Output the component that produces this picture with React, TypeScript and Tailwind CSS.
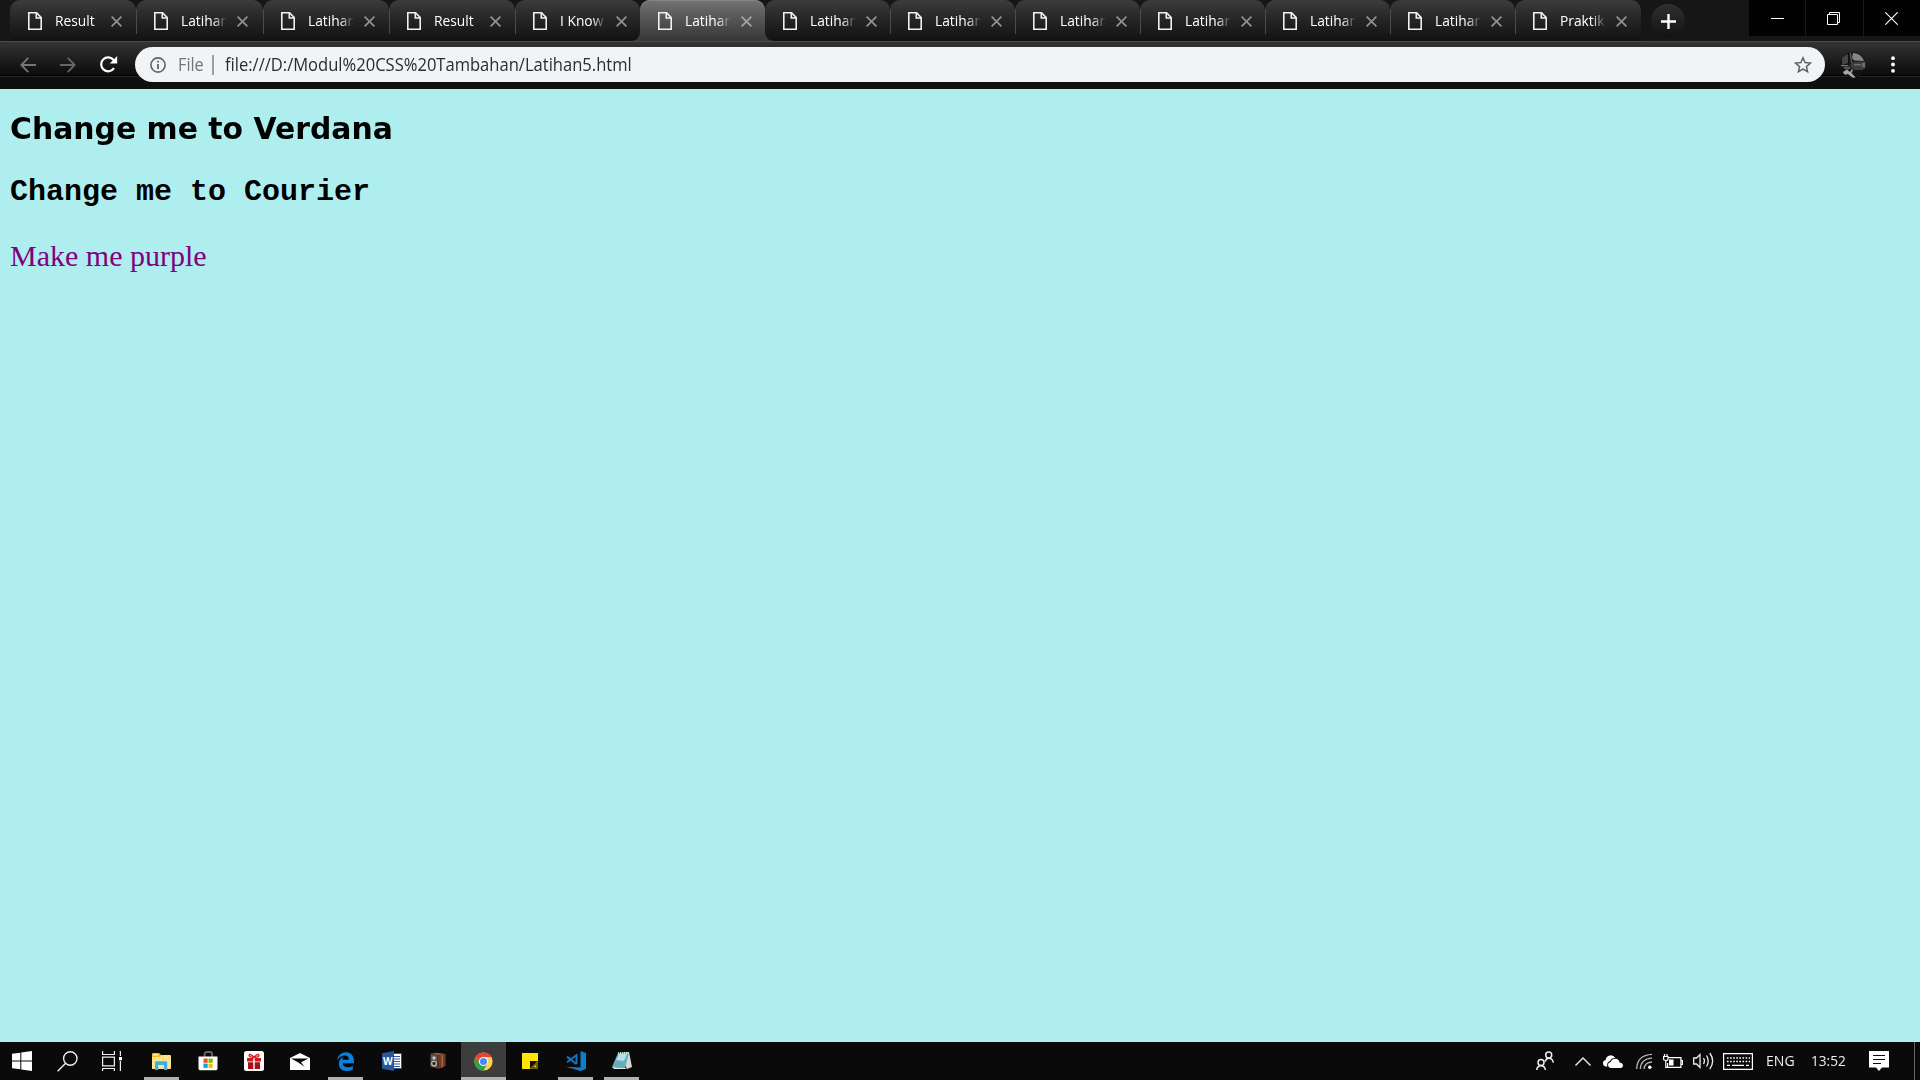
import React from 'react';

const tabs = [
  { t: 'Result', w: 126 },
  { t: 'Latihan', w: 127 },
  { t: 'Latihan', w: 126 },
  { t: 'Result', w: 126 },
  { t: 'I Know', w: 125 },
  { t: 'Latihan', w: 125, active: true },
  { t: 'Latihan', w: 125 },
  { t: 'Latihan', w: 125 },
  { t: 'Latihan', w: 125 },
  { t: 'Latihan', w: 125 },
  { t: 'Latihan', w: 125 },
  { t: 'Latihan', w: 125 },
  { t: 'Praktik', w: 126 },
];

function FileIcon() {
  return (
    <svg width="14" height="18" viewBox="0 0 14 18" className="shrink-0" fill="none" stroke="#f1f1f1" strokeWidth="1.6">
      <path d="M.8 .8H8.6L13.2 5.6V17.2H.8Z" />
      <path d="M8.3 1V6H13" />
    </svg>
  );
}

function Tab({ t, w, active, last, beforeActive }: { t: string; w: number; active?: boolean; last?: boolean; beforeActive?: boolean }) {
  return (
    <div
      className={
        'relative flex h-full shrink-0 items-center rounded-t-[10px] pl-[18px] ' +
        (active
          ? 'z-10 h-[42px] bg-linear-to-b from-[#737373] to-[#363636] shadow-[inset_0_1px_0_#858585]'
          : 'bg-linear-to-b from-[#3c3c3c] via-[#242424] to-[#121212]')
      }
      style={{ width: w }}
    >
      <div className="flex h-[42px] items-center self-start">
        <FileIcon />
        <div className={'-mt-[2px] ml-[13px] w-[46px] whitespace-nowrap text-[15px] leading-[20px] text-white ' + (t === 'Result' ? '' : 'mask-r-from-70% mask-r-to-100%')}>
          <span className="inline-block origin-left scale-x-[.92]">{t}</span>
        </div>
        <svg width="11" height="11" viewBox="0 0 11 11" className="ml-[10px] shrink-0" stroke={active ? '#a5a5a5' : '#929292'} strokeWidth="1.7">
          <path d="M.6 .6L10.4 10.4M10.4 .6L.6 10.4" />
        </svg>
      </div>
      {!active && !last && !beforeActive && <div className="absolute -right-px top-[9px] z-10 h-[25px] w-px bg-[#4c4c4c]" />}
      {active && (
        <>
          <svg className="absolute bottom-0 -left-[10px]" width="10" height="10" viewBox="0 0 10 10"><path d="M10 0V10H0Q10 10 10 0" fill="#3c3c3c" /></svg>
          <svg className="absolute bottom-0 -right-[10px]" width="10" height="10" viewBox="0 0 10 10"><path d="M0 0V10H10Q0 10 0 0" fill="#3c3c3c" /></svg>
        </>
      )}
    </div>
  );
}

function WindowButtons() {
  return (
    <div className="ml-auto flex h-[36px] shrink-0 gap-px bg-[#191919]">
      <div className="flex w-[56px] items-center justify-center bg-[#020202]">
        <svg width="13" height="13" viewBox="0 0 13 13"><path d="M0 6.5H13" stroke="#fff" /></svg>
      </div>
      <div className="flex w-[57px] items-center justify-center bg-[#020202] pr-[2px]">
        <svg width="13" height="13" viewBox="0 0 13 13" fill="none" stroke="#fff"><path d="M.5 2.5H10.5V12.5H.5ZM2.5 2.5V.5H12.5V10.5H10.5" /></svg>
      </div>
      <div className="flex w-[56px] items-center justify-center bg-[#020202] pr-[2px]">
        <svg width="13" height="13" viewBox="0 0 13 13" stroke="#fff" strokeWidth="1.1"><path d="M.3 .3L12.7 12.7M12.7 .3L.3 12.7" /></svg>
      </div>
    </div>
  );
}

function Toolbar() {
  return (
    <div className="h-[48px] shrink-0 bg-[#0f0f0f]">
      <div className="h-[35px] border-t border-[#4a4a4a] bg-linear-to-b from-[#343434] to-[#0b0b0b] shadow-[0_1px_0_#252525,inset_0_-1px_0_#000]">
        <div className="flex h-[45px] items-center">
          <svg width="16" height="16" viewBox="0 0 16 16" className="ml-[20px] shrink-0" fill="none" stroke="#777" strokeWidth="1.8"><path d="M16 8H1.5M8.3 .8L1.3 8L8.3 15.2" /></svg>
          <svg width="16" height="16" viewBox="0 0 16 16" className="ml-[24px] shrink-0" fill="none" stroke="#666" strokeWidth="1.8"><path d="M0 8H14.5M7.7 .8L14.7 8L7.7 15.2" /></svg>
          <svg width="18" height="17" viewBox="0 0 18 17" className="ml-[24px] shrink-0"><path d="M14 12.2A7 7 0 1 1 13.7 4" fill="none" stroke="#fff" strokeWidth="2.2" /><path d="M17.2 0V7.4H9.8Z" fill="#fff" /></svg>
          <div className="ml-[17px] flex h-[35px] w-[1690px] shrink-0 items-center rounded-full bg-[#f1f3f4] text-[17.5px]">
            <svg width="16" height="16" viewBox="0 0 16 16" className="ml-[15px] shrink-0"><circle cx="8" cy="8" r="7.1" fill="none" stroke="#5f6368" strokeWidth="1.6" /><path d="M7.1 3.8h1.8v1.8H7.1zM7.1 7h1.8v5H7.1z" fill="#5f6368" /></svg>
            <span className="ml-[12px] w-[26px] whitespace-nowrap text-[#70757a]"><span className="inline-block origin-left scale-x-[.93]">File</span></span>
            <div className="ml-[8px] h-[20px] w-[2px] bg-[#9a9ea2]" />
            <span className="ml-[11px] w-[440px] whitespace-nowrap text-[#2b2c2f]"><span className="inline-block origin-left scale-x-[.946]">file:///D:/Modul%20CSS%20Tambahan/Latihan5.html</span></span>
            <svg width="18" height="18" viewBox="0 0 18 18" className="ml-auto mr-[13px] shrink-0" fill="none" stroke="#5f6368" strokeWidth="1.5"><path d="M9 1.8L11.1 6.6L16.4 7.1L12.4 10.6L13.6 15.8L9 13L4.4 15.8L5.6 10.6L1.6 7.1L6.9 6.6Z" /></svg>
          </div>
          <svg width="26" height="26" viewBox="0 0 26 26" className="ml-[15px] shrink-0">
            <defs><clipPath id="avatar"><circle cx="13" cy="13" r="12.7" /></clipPath></defs>
            <g clipPath="url(#avatar)">
              <path d="M0 0H26V26H0Z" fill="#131313" />
              <path d="M2 5L8 2L8 11L2 13Z" fill="#454545" />
              <path d="M13 1Q21 1 24 9L14 8.500L12 6Z" fill="#858585" />
              <path d="M10.500 1L11.500 11" stroke="#777" strokeWidth="1" />
              <path d="M11 10L26 9V16L22 18H14L10 14Z" fill="#3d3d3d" />
              <path d="M14 12H21V13.500H14ZM22 11H25V15H22Z" fill="#6d6d6d" />
              <path d="M0 13H9L12 17L6 18Z" fill="#303030" />
              <path d="M3 20L7 17.500L10 20L12 17L13 18L11.500 21L16 26L13 26L8 22L4 23Z" fill="#a8a8a8" />
              <path d="M1 13.500L8 13.500M4 16L10 16" stroke="#777" />
            </g>
          </svg>
          <svg width="4" height="17" viewBox="0 0 4 17" className="ml-[25px] shrink-0" fill="#fff"><circle cx="2" cy="2.2" r="1.9" /><circle cx="2" cy="8.5" r="1.9" /><circle cx="2" cy="14.8" r="1.9" /></svg>
        </div>
      </div>
    </div>
  );
}

const appIcons: { w: number; running?: boolean; active?: boolean; icon: React.ReactNode }[] = [
  {
    w: 44,
    icon: <svg width="20" height="20" viewBox="0 0 20 20" fill="#fff"><path d="M0 2.8L8.3 1.7V9.5H0ZM9.3 1.5L20 0V9.5H9.3ZM0 10.5H8.3V18.3L0 17.2ZM9.3 10.5H20V20L9.3 18.5Z" /></svg>,
  },
  {
    w: 46,
    icon: <svg width="21" height="21" viewBox="0 0 21 21" fill="none" stroke="#eee" strokeWidth="1.4"><circle cx="13.3" cy="7.5" r="6.7" /><path d="M8.6 12.3L.6 20.3" /></svg>,
  },
  {
    w: 44,
    icon: (
      <svg width="20" height="20" viewBox="0 0 20 20" fill="none" stroke="#eee" strokeWidth="1.2">
        <path d="M.6 0V3.5H12.4V0M.6 6.2H12.4V14.8H.6ZM.6 20V17.5H12.4V20M18.4 0V5M18.4 10V20" />
        <path d="M17 6H20V9.3H17Z" fill="#fff" stroke="none" />
      </svg>
    ),
  },
  {
    w: 45, running: true,
    icon: (
      <svg width="19" height="17" viewBox="0 0 19 17">
        <path d="M0 1Q0 0 1 0H7L9 2H17V5H0Z" fill="#f5b921" /><path d="M1 1.5H6V2.5H1Z" fill="#fff" />
        <path d="M0 4H8L10 2H18Q19 2 19 3V15Q19 16 18 16H0Z" fill="#ffe391" />
        <path d="M3 17V9.5Q3 8.3 4.2 8.3H14Q15.2 8.3 15.2 9.5V17H12V12H6.2V17Z" fill="#38b1e8" />
      </svg>
    ),
  },
  {
    w: 45,
    icon: (
      <svg width="20" height="20" viewBox="0 0 20 20">
        <path d="M6.5 6V3.5Q6.5 1 9 1H12Q14.2 1 14.2 3.5V6" fill="none" stroke="#666" strokeWidth="1.8" />
        <path d="M.5 5.5H19.5V17.5Q19.5 19.3 18 19.3H2Q.5 19.3 .5 17.5Z" fill="#fff" />
        <path d="M5.5 7.5H9.7V11.8H5.5Z" fill="#f25022" /><path d="M10.5 7.5H14.7V11.8H10.5Z" fill="#7fba00" />
        <path d="M5.5 12.6H9.7V16.9H5.5Z" fill="#00a4ef" /><path d="M10.5 12.6H14.7V16.9H10.5Z" fill="#ffb900" />
      </svg>
    ),
  },
  {
    w: 45,
    icon: (
      <svg width="20" height="20" viewBox="0 0 20 20">
        <rect width="20" height="20" rx="2.5" fill="#fff" />
        <path d="M3 7H9.300V10.500H3ZM10.700 7H17V10.500H10.700Z" fill="#c81d25" /><path d="M4 11.200H9.300V18H4ZM10.700 11.200H16V18H10.700Z" fill="#a90f17" />
        <path d="M10 6.300Q5 6.500 5.200 4.300Q6 2 10 6.300Q14 2 14.800 4.300Q15 6.500 10 6.300" fill="none" stroke="#d5222a" strokeWidth="1.500" />
      </svg>
    ),
  },
  {
    w: 45,
    icon: <svg width="20" height="17" viewBox="0 0 20 17"><path d="M0 5L10 0L20 5V17H0Z" fill="#fff" /><path d="M1 5.5H18.5L11 9.2L14.5 13.8L7.5 9Z" fill="#090909" /></svg>,
  },
  {
    w: 45, running: true,
    icon: (
      <svg width="17" height="19" viewBox="0 0 17 19">
        <path d="M.2 8.4C1 3 4.5 .2 9 .2C14 .2 17 4 17 9V11.2H5.6C5.8 14 8 15.3 10.5 15.3C12.7 15.3 14.4 14.6 15.8 13.7V17.4C14 18.5 12 19 9.6 19C5 19 1.9 16.2 1.9 12C1.9 9 3.4 6.5 6.3 5.1C5.8 6 5.6 7 5.5 7.8H11.8C11.8 5 10.5 3.6 7.9 3.6C4.8 3.6 2 5.4 .2 8.4Z" fill="#0a7fdc" />
      </svg>
    ),
  },
  {
    w: 45,
    icon: (
      <svg width="20" height="20" viewBox="0 0 20 20">
        <path d="M11 2.5H19.5V17.5H11Z" fill="#fff" stroke="#2b579a" /><path d="M12 5.5H18M12 8H18M12 10.5H18M12 13H18M12 15.5H18" stroke="#2b579a" />
        <path d="M0 2.3L12 0V20L0 17.7Z" fill="#2b579a" />
        <text x="5.9" y="13.8" textAnchor="middle" fontSize="10" fontWeight="bold" fill="#fff">W</text>
      </svg>
    ),
  },
  {
    w: 45,
    icon: (
      <svg width="18" height="18" viewBox="0 0 18 18">
        <path d="M1.500 1.500L8 .8L16.500 2V14L9.500 17L1.500 15Z" fill="#3b1d11" />
        <path d="M9 3.200L16.500 2V14L9.500 17Z" fill="#6f3a22" /><path d="M12.500 3L14 2.600V15L12.500 15.700Z" fill="#a5694a" />
        <path d="M1.500 1.500L8 .8L16.500 2L9 3.300Z" fill="#8d573c" />
        <path d="M1.500 2.300L8.500 3.500V16.300L1.500 14.500Z" fill="#5c534d" />
        <circle cx="5" cy="6" r="1.700" fill="#c9c4bf" /><circle cx="5" cy="11.600" r="2.300" fill="#2a2522" stroke="#cbc5bf" strokeWidth="1.100" />
      </svg>
    ),
  },
  {
    w: 45, running: true, active: true,
    icon: (
      <svg width="19" height="19" viewBox="0 0 48 48">
        <circle cx="24" cy="24" r="23" fill="#ffd24a" />
        <path d="M4.1 12.5A23 23 0 0 0 24 47L34 29.7L24 24L14 29.7Z" fill="#2ba24c" />
        <path d="M24 24V12.5H43.9A23 23 0 0 0 4.1 12.5L14 29.8Z" fill="#e54335" />
        <circle cx="24" cy="24" r="11.5" fill="#fff" /><circle cx="24" cy="24" r="9" fill="#4688f4" />
      </svg>
    ),
  },
  {
    w: 45,
    icon: <svg width="16" height="16" viewBox="0 0 16 16"><path d="M0 0H16V16H0Z" fill="#ffe500" /><path d="M8 8H16L8 16Z" fill="#12120a" /><path d="M16 8V16H8Z" fill="#6b6000" /><path d="M14 12V14H12Z" fill="#ffe500" /></svg>,
  },
  {
    w: 45, running: true,
    icon: (
      <svg width="20" height="20" viewBox="0 0 20 20">
        <path d="M14.5 0L20 2V18L14.5 20L0 15.8L14.5 16.5Z" fill="#0b7fcc" />
        <path d="M1 5.6L10.2 13M1 11.2L10.5 4.3V13.3" fill="none" stroke="#1673ba" strokeWidth="2" />
      </svg>
    ),
  },
  {
    w: 45, running: true,
    icon: (
      <svg width="20" height="18" viewBox="0 0 20 18">
        <path d="M6 1L17 0L20 15L15 17Z" fill="#d5dad9" /><path d="M6 1L17 1L13 16L0 15Z" fill="#67aebb" /><path d="M7 2L15 2L12 9L4 8Z" fill="#b4e0e7" />
        <path d="M0 15L13 16L15 17L2 17Z" fill="#e4eff0" /><path d="M6 1H17" stroke="#eee" strokeDasharray="1 1" strokeWidth="1.5" />
      </svg>
    ),
  },
];

function Taskbar() {
  return (
    <div className="flex h-[38px] w-full shrink-0 bg-[#0a0a0a] text-white">
      {appIcons.map((a, i) => (
        <div
          key={i}
          className={'relative flex shrink-0 items-center justify-center ' + (a.active ? 'bg-[#3d3d3d] ' : '') + (i > 3 ? 'ml-px ' : i === 3 ? 'ml-[5px] ' : '')}
          style={{ width: a.w }}
        >
          {a.icon}
          {a.running && <div className={'absolute bottom-0 h-[3px] bg-[#b0b0ac] ' + (a.active ? 'inset-x-0' : 'inset-x-[5px]')} />}
        </div>
      ))}
      <div className="ml-auto flex items-center">
        <svg width="18" height="20" viewBox="0 0 18 20" fill="none" stroke="#eee" strokeWidth="1.5">
          <circle cx="12.7" cy="3.9" r="3" /><path d="M9.2 10.6Q9.8 7.2 12.8 7.2Q16.6 7.2 17.3 11.6" /><circle cx="5" cy="11.4" r="3" /><path d="M.7 19Q1.2 14.7 5 14.7Q8.8 14.7 9.4 19" />
        </svg>
        <svg width="16" height="9" viewBox="0 0 16 9" className="ml-[21px]" fill="none" stroke="#eee" strokeWidth="1.4"><path d="M.5 8.5L8 1L15.5 8.5" /></svg>
        <svg width="20" height="13" viewBox="0 0 20 13" className="ml-[12px]">
          <path d="M3 11.5Q0 11 0 8.2Q0 5.5 2.7 5Q3 1 7 .4Q10.500 0 12.300 3Q8.500 2.500 7 6Q3.500 7 4.300 11.500Z" fill="#fff" />
          <path d="M7.500 13Q5 12.500 5 10Q5 7.500 7.800 7Q9 3.500 12.500 3.700Q15.800 4 16.600 7.500Q20 8 20 10.500Q19.800 13 17.500 13Z" fill="#fff" />
        </svg>
        <svg width="16" height="17" viewBox="0 0 16 17" className="ml-[13px]" fill="none" stroke="#b5b5b5" strokeWidth="1.3">
          <path d="M.7 16Q1 2 16 1.300M4.300 16Q4.800 5.800 16 5.200M8 16Q8.500 9.500 16 9" /><circle cx="13.800" cy="14.300" r="1.800" fill="#fff" stroke="none" />
        </svg>
        <svg width="20" height="15" viewBox="0 0 20 15" className="ml-[11px]" fill="none" stroke="#fff" strokeWidth="1.200">
          <path d="M5 3.600H17.900V13.400H4.600V9M18 6.500H19.400V10.500H18M1.500 0V2.500M4 0V2.500M.6 2.500H5V5Q5 6.500 2.800 6.500Q.6 6.500 .6 5ZM2.800 6.500V13.400H5" /><path d="M6 5.500H10.500V11.500H6Z" fill="#fff" stroke="none" />
        </svg>
        <svg width="21" height="18" viewBox="0 0 21 18" className="ml-[10px]" fill="none" stroke="#eee" strokeWidth="1.300">
          <path d="M.7 6H3.500L7 2.500V15.500L3.500 12H.7Z" /><path d="M10.500 6Q12.300 9 10.500 12M13.500 3.500Q17 9 13.500 14.500M16.800 1Q22.500 9 16.800 17" />
        </svg>
        <svg width="30" height="17" viewBox="0 0 30 17" className="ml-[9px]" fill="none" stroke="#fff" strokeWidth="1.200">
          <path d="M.6 .6H29.400V16.400H.6Z" /><path d="M4 5H27M4 8.500H27" strokeWidth="1.400" strokeDasharray="1.600 1.500" /><path d="M4 12.300H7M9 12.300H21M23 12.300H26" />
        </svg>
        <span className="-mt-px ml-[13px] w-[29px] whitespace-nowrap text-[15px] text-[#eee]"><span className="inline-block origin-left scale-x-[.94]">ENG</span></span>
        <span className="-mt-px ml-[16px] w-[35px] whitespace-nowrap text-[15px] text-[#eee]"><span className="inline-block origin-left scale-x-[.91]">13:52</span></span>
        <svg width="20" height="20" viewBox="0 0 20 20" className="ml-[23px]"><path d="M0 0H20V16.500H13L10 20L7 16.500H0Z" fill="#fff" /><path d="M4 4.500H16M4 8.500H16M4 12.500H12" stroke="#090b0a" strokeWidth="1.200" /></svg>
        <div className="ml-[25px] h-[38px] w-px bg-[#666]" />
        <div className="w-[5px]" />
      </div>
    </div>
  );
}

export default function App() {
  return (
    <div className="flex h-[1080px] w-[1920px] flex-col overflow-hidden bg-[#afeeee] font-['Open_Sans',sans-serif]">
      <div className="flex h-[41px] shrink-0 bg-[#161616] pl-[10px]">
        {tabs.map((tab, i) => (
          <Tab key={i} {...tab} last={i === tabs.length - 1} beforeActive={!!tabs[i + 1]?.active} />
        ))}
        <div className="mt-[4px] ml-[10px] flex size-[34px] items-center justify-center rounded-full bg-linear-to-b from-[#303030] to-[#121212]">
          <svg width="15" height="15" viewBox="0 0 15 15" stroke="#fff" strokeWidth="2.400"><path d="M7.500 0V15M0 7.500H15" /></svg>
        </div>
        <WindowButtons />
      </div>
      <Toolbar />
      <main className="flex-1 px-[10px] text-black">
        <h2 className="mt-[22px] whitespace-nowrap font-['DejaVu_Sans',sans-serif] text-[30px] leading-[36px] font-bold"><span className="inline-block origin-left scale-x-[.995]">Change me to Verdana</span></h2>
        <h2 className="mt-[28px] whitespace-nowrap font-['Liberation_Mono',monospace] text-[30px] leading-[34px] font-bold">Change me to Courier</h2>
        <p className="mt-[30px] whitespace-nowrap font-['Liberation_Serif',serif] text-[30px] leading-[34px] text-[#800080]">Make me purple</p>
      </main>
      <Taskbar />
    </div>
  );
}
